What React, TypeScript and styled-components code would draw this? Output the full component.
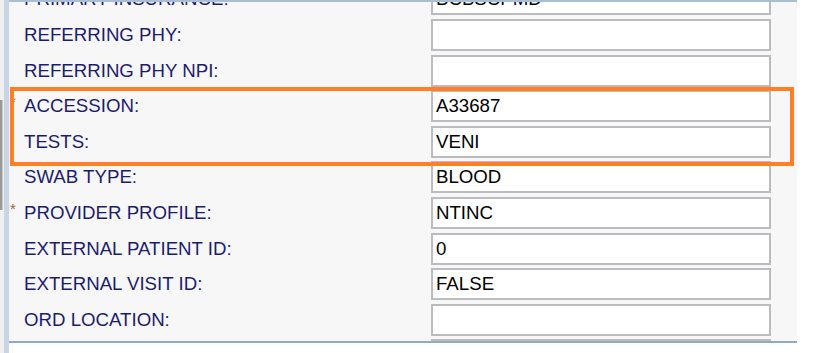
import React from "react";
import styled, { createGlobalStyle } from "styled-components";

const Global = createGlobalStyle`
  html, body { margin: 0; padding: 0; background: #ffffff; }
  body { font-family: "Liberation Sans", Arial, sans-serif; }
`;

const Page = styled.div`
  position: relative;
  display: flex;
  width: 824px;
  height: 353px;
  overflow: hidden;
  background: #ffffff;
`;

const Gutter = styled.div`
  width: 4px;
  height: 100%;
  background: #efefef;
  display: flex;
  flex-direction: column;
`;

const ScrollThumb = styled.div`
  margin-top: 100px;
  width: 3px;
  height: 110px;
  background: #9a9a9a;
  border-right: 1px solid #c8c8c8;
  box-sizing: border-box;
`;

const Stripe = styled.div`
  width: 5px;
  height: 100%;
  background: #c9d5e4;
`;

const Panel = styled.div`
  width: 788px;
  height: 343px;
  box-sizing: border-box;
  background: #f7f7f7;
  border-top: 2px solid #a9bdd5;
  border-bottom: 2px solid #90a9c5;
  overflow: hidden;
`;

const Form = styled.div`
  display: grid;
  grid-template-columns: 15px 407px 340px 26px;
  grid-auto-rows: 32px;
  row-gap: 3.6px;
  align-items: center;
  margin-top: -18.6px;
`;

const Star = styled.span<{ $show: boolean }>`
  visibility: ${(p) => (p.$show ? "visible" : "hidden")};
  align-self: start;
  padding: 4px 0 0 1px;
  color: #a8602a;
  font-size: 15px;
  line-height: 1;
`;

const Label = styled.span`
  color: #1c1c6e;
  font-size: 18.67px;
  white-space: nowrap;
`;

const Field = styled.div`
  box-sizing: border-box;
  height: 32px;
  background: #ffffff;
  border: 2px solid #bcbcc0;
  padding: 0 3px;
  display: flex;
  align-items: center;
  color: #000000;
  font-size: 18.67px;
  white-space: nowrap;
  overflow: hidden;
`;

const Spacer = styled.span``;

const Highlight = styled.div`
  position: absolute;
  left: 10px;
  top: 87px;
  width: 784px;
  height: 79px;
  box-sizing: border-box;
  border: 4.5px solid #ff7f27;
  pointer-events: none;
`;

const rows: { label: string; value: string; required?: boolean }[] = [
  { label: "PRIMARY INSURANCE:", value: "BCBSCPMD" },
  { label: "REFERRING PHY:", value: "" },
  { label: "REFERRING PHY NPI:", value: "" },
  { label: "ACCESSION:", value: "A33687", required: true },
  { label: "TESTS:", value: "VENI" },
  { label: "SWAB TYPE:", value: "BLOOD" },
  { label: "PROVIDER PROFILE:", value: "NTINC", required: true },
  { label: "EXTERNAL PATIENT ID:", value: "0" },
  { label: "EXTERNAL VISIT ID:", value: "FALSE" },
  { label: "ORD LOCATION:", value: "" },
  { label: "", value: "" },
];

export default function App() {
  return (
    <>
      <Global />
      <Page>
        <Gutter>
          <ScrollThumb />
        </Gutter>
        <Stripe />
        <Panel>
          <Form>
            {rows.map((r, i) => (
              <React.Fragment key={i}>
                <Star $show={!!r.required}>*</Star>
                <Label>{r.label}</Label>
                <Field>{r.value}</Field>
                <Spacer />
              </React.Fragment>
            ))}
          </Form>
        </Panel>
        <Highlight />
      </Page>
    </>
  );
}
